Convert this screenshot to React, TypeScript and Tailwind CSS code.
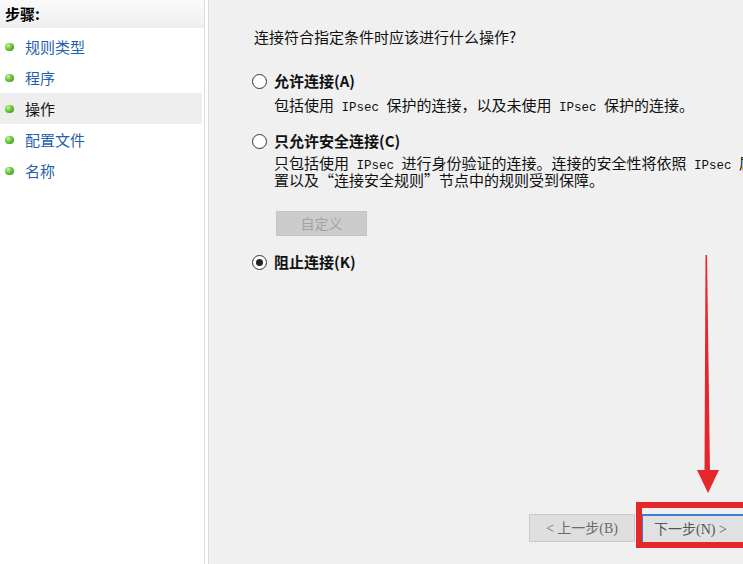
import React from "react";

const cjk = { fontFamily: '"Noto Sans CJK SC", "Noto Sans", sans-serif' };
const mono = { fontFamily: '"Liberation Mono", monospace' };

function Bullet() {
  return (
    <span className="inline-block h-[8px] w-[9px] shrink-0 rounded-full bg-[radial-gradient(circle_at_35%_30%,#c8f5a0_0%,#6cc33a_45%,#2f8a16_100%)]" />
  );
}

function Radio({ checked }: { checked?: boolean }) {
  return (
    <span className="flex h-[15px] w-[15px] shrink-0 items-center justify-center rounded-full border border-[#333] bg-white">
      {checked && <span className="h-[7px] w-[7px] rounded-full bg-[#222]" />}
    </span>
  );
}

const IP = () => (
  <span className="whitespace-pre text-[12.5px] leading-none" style={mono}>
    {" IPsec "}
  </span>
);

export default function App() {
  const steps = ["规则类型", "程序", "操作", "配置文件", "名称"];
  return (
    <div className="relative flex h-[564px] w-[743px] overflow-hidden bg-[#f0f0f0]" style={cjk}>
      {/* left steps panel */}
      <div className="flex h-full w-[205px] shrink-0 flex-col border-r border-[#dedede] bg-white">
        <div className="flex h-[28px] items-center bg-gradient-to-b from-[#fbfbfb] to-[#eeeeee] pl-[5px] text-[15px] font-bold text-black">
          步骤:
        </div>
        <div className="mt-[3px] flex flex-col pr-[2px]">
          {steps.map((s) => (
            <div
              key={s}
              className={`flex h-[31px] items-center gap-[11px] pl-[5px] text-[15px] ${
                s === "操作" ? "bg-[#eeeeee] text-[#111]" : "text-[#1f5fae]"
              }`}
            >
              <Bullet />
              <span className="leading-none">{s}</span>
            </div>
          ))}
        </div>
      </div>
      <div className="w-[4px] shrink-0 border-r border-[#dadada] bg-white" />

      {/* right content */}
      <div className="flex min-w-0 flex-1 flex-col">
        <div className="flex flex-col pl-[43px] text-[#111]">
          <div className="mt-[27px] flex h-5 items-center pl-[2px] text-[15px] leading-5">
            连接符合指定条件时应该进行什么操作?
          </div>

          <div className="mt-[24px] flex h-5 items-center gap-[7px]">
            <Radio />
            <span className="text-[15px] font-bold">允许连接(A)</span>
          </div>
          <div className="mt-[4px] h-5 whitespace-nowrap pl-[22px] text-[15px] leading-5">
            包括使用<IP />保护的连接，以及未使用<IP />保护的连接。
          </div>

          <div className="mt-[16px] flex h-5 items-center gap-[7px]">
            <Radio />
            <span className="text-[15px] font-bold">只允许安全连接(C)</span>
          </div>
          <div className="mt-[3px] flex flex-col whitespace-nowrap pl-[22px] text-[15px] leading-[17px]">
            <div className="h-[17px]">
              只包括使用<IP />进行身份验证的连接。连接的安全性将依照<IP />属性中的设
            </div>
            <div className="h-[17px]">置以及“连接安全规则”节点中的规则受到保障。</div>
          </div>

          <div className="mt-[23px] pl-[24px]">
            <div className="flex h-[25px] w-[91px] items-center justify-center border border-[#c4c4c4] bg-[#cccccc] text-[14px] text-[#a3a3a3]">
              自定义
            </div>
          </div>

          <div className="mt-[16px] flex h-5 items-center gap-[7px]">
            <Radio checked />
            <span className="text-[15px] font-bold">阻止连接(K)</span>
          </div>
        </div>

        <div className="mb-[22px] mt-auto flex gap-[7px] pl-[320px]">
          <div
            className="flex h-[28px] w-[106px] shrink-0 items-center justify-center border border-[#c9c9c9] bg-[#dfdfdf] text-[14px] text-[#6a6a6a]"
            style={{ fontFamily: '"Liberation Serif", "Noto Sans CJK SC", serif' }}
          >
            &lt; 上一步(B)
          </div>
          <div
            className="flex h-[28px] w-[112px] shrink-0 items-center border-t-2 border-l border-[#3c7fd0] bg-[#e1e1e1] pl-[11px] text-[14px] text-[#555]"
            style={{ fontFamily: '"Liberation Serif", "Noto Sans CJK SC", serif' }}
          >
            下一步(N) &gt;
          </div>
        </div>
      </div>

      {/* red annotation overlay */}
      <div className="pointer-events-none absolute left-[636px] top-[502px] h-[46px] w-[120px] border-[6px] border-[#e5262b]" />
      <svg
        className="pointer-events-none absolute left-0 top-0"
        width={743}
        height={564}
        viewBox="0 0 743 564"
      >
        <polygon points="705.5,255 707,255 710,472 704.5,472" fill="#e5262b" />
        <polygon points="697,470 719,470 708,493" fill="#e5262b" />
      </svg>
    </div>
  );
}
